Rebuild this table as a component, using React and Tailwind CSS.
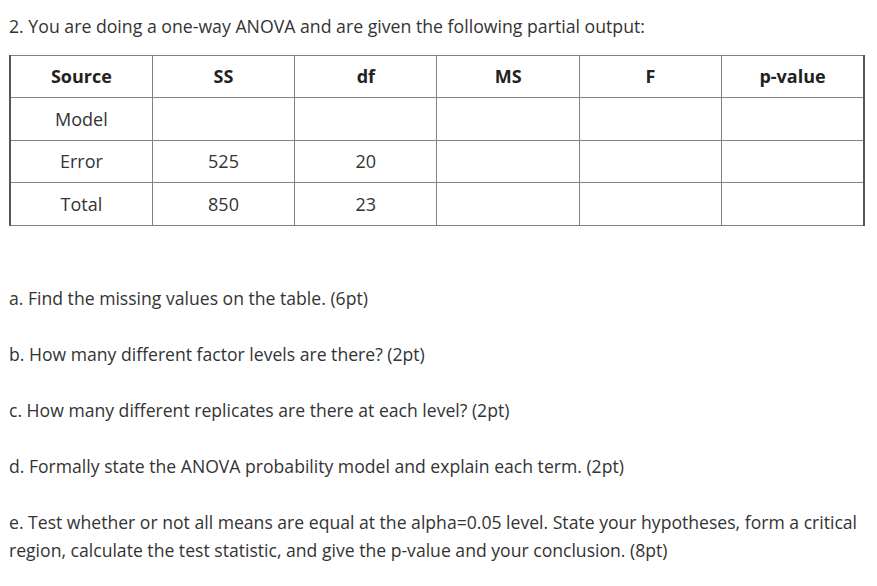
import React from "react";

const cols = ["Source", "SS", "df", "MS", "F", "p-value"];
const rows = [
  ["Model", "", "", "", "", ""],
  ["Error", "525", "20", "", "", ""],
  ["Total", "850", "23", "", "", ""],
];
const rowH = ["h-[43px]", "h-[42px]", "h-[43px]"];

export default function App() {
  return (
    <div
      className="w-[877px] h-[586px] bg-white text-[#333333] pl-[9px] overflow-hidden"
      style={{ fontFamily: "'Open Sans', sans-serif" }}
    >
      <p className="text-[17.7px] leading-[28px] pt-[12px] whitespace-nowrap">
        2. You are doing a one-way ANOVA and are given the following partial output:
      </p>
      <table className="mt-[15px] w-[856px] border-collapse table-fixed border-l-2 border-r-2 border-l-[#555] border-r-[#555] text-[18px]">
        <thead>
          <tr>
            {cols.map((c) => (
              <th
                key={c}
                className="h-[42px] p-0 border border-[#808080] font-bold text-center text-[#222]"
              >
                {c}
              </th>
            ))}
          </tr>
        </thead>
        <tbody>
          {rows.map((r, i) => (
            <tr key={i}>
              {r.map((v, j) => (
                <td
                  key={j}
                  className={`${rowH[i]} p-0 border border-[#808080] text-center font-normal`}
                >
                  {v}
                </td>
              ))}
            </tr>
          ))}
        </tbody>
      </table>
      <div className="mt-[58px] text-[17.6px] leading-[28px] flex flex-col gap-[28px] whitespace-nowrap">
        <p>a. Find the missing values on the table. (6pt)</p>
        <p>b. How many different factor levels are there? (2pt)</p>
        <p>c. How many different replicates are there at each level? (2pt)</p>
        <p>d. Formally state the ANOVA probability model and explain each term. (2pt)</p>
        <p>
          e. Test whether or not all means are equal at the alpha=0.05 level. State your hypotheses, form a critical
          <br />
          region, calculate the test statistic, and give the p-value and your conclusion. (8pt)
        </p>
      </div>
    </div>
  );
}
